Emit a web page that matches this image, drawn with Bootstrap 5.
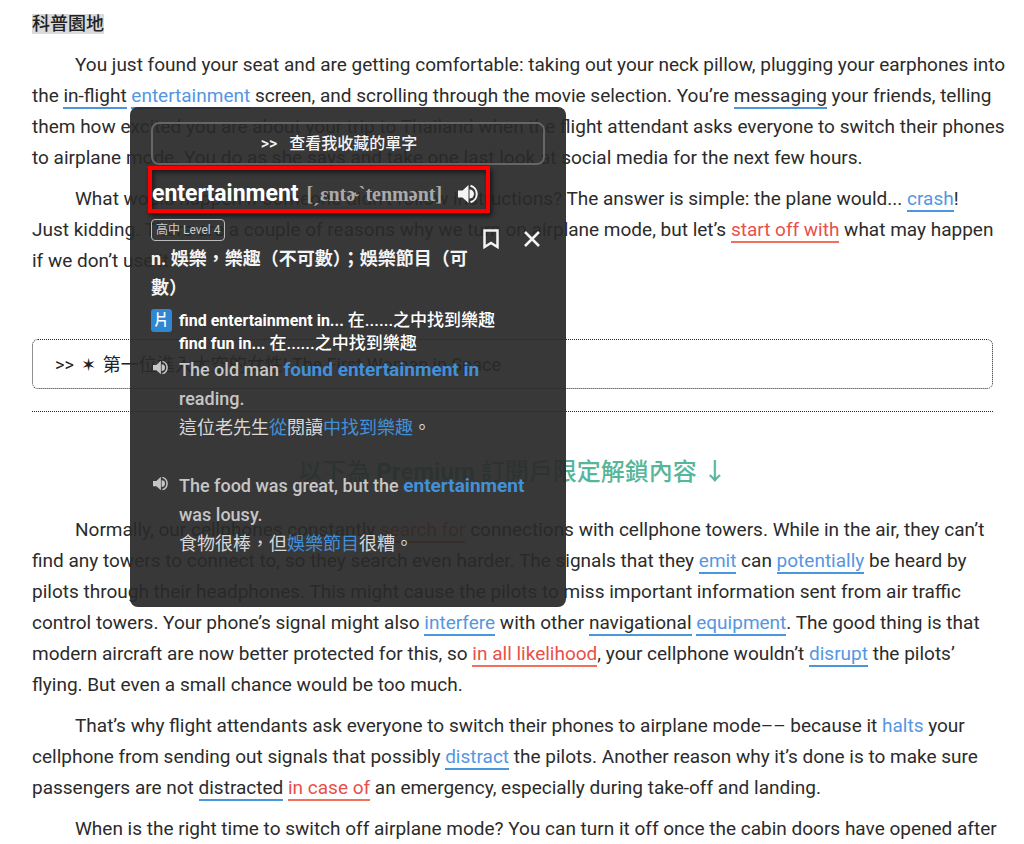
<!DOCTYPE html>
<html lang="zh-Hant">
<head>
<meta charset="utf-8">
<meta name="viewport" content="width=device-width, initial-scale=1">
<title>科普園地</title>
<link href="https://cdn.jsdelivr.net/npm/bootstrap@5.3.0/dist/css/bootstrap.min.css" rel="stylesheet">
<style>
  body { font-family: Roboto, "Noto Sans CJK TC", sans-serif; color: #2b2b2b; background: #fff; overflow: hidden; }
  .article { padding: 8px 12px 0 32px; }
  .article p { font-size: 19px; line-height: 31px; margin: 0 0 10px; text-indent: 43px; }
  .section-name { font-size: 18px; line-height: 31px; font-weight: 500; margin: 0 0 10px; }
  .section-name span { background: #dadada; color: #222; display: inline-block; line-height: 20px; }
  .vocab, .vocab-plain, .idiom { text-decoration: none; border-bottom: 2px solid #4a96dc; }
  .vocab { color: #5596e2; }
  .vocab.bare { border-bottom: 0; }
  .vocab-plain { color: #2b2b2b; }
  .idiom { color: #e8504a; border-color: #f0705c; }
  .related { margin: 63px 19px 22px 0; padding: 0 22px; height: 50px; border: 1px dotted #222; border-radius: 6px; font-size: 18px; color: #222; text-decoration: none; gap: 7px; }
  .divider { margin: 0 19px 42px 0; border-top: 1px dotted #222; }
  .premium { margin: 0 19px 24px 0; font-size: 24px; line-height: 36px; font-weight: 500; color: #56b69a; }

  .word-card { top: 107px; left: 130px; width: 436px; min-height: 500px; padding: 15px 21px; border-radius: 8px; background: rgba(41, 41, 41, .93); color: #f4f4f4; }
  .word-card button { color: inherit; background: none; border: 0; padding: 0; line-height: 0; }
  .word-card .saved { border: 2px solid #666; border-radius: 8px; height: 43px; font-size: 16px; line-height: 20px; font-weight: 500; gap: 12px; padding-right: 18px; }
  .headword { margin: 1px 0 4px -3px; height: 47px; border: 4px solid #f00; box-shadow: 2px 3px 5px rgba(0,0,0,.6), inset 2px 3px 5px rgba(0,0,0,.5); padding: 8px 8px 0 0; }
  .headword h1 { font-size: 23px; line-height: 30px; font-weight: 700; margin: 0 8px 0 0; color: #fff; }
  .ipa { font-family: "Liberation Serif", "DejaVu Serif", serif; font-size: 20px; line-height: 30px; font-weight: 700; color: #aaa; margin-right: 16px; }
  .level { display: inline-block; border: 1px solid #bbb; border-radius: 4px; font-size: 12px; line-height: 20px; padding: 0 4px; color: #ccc; }
  .meaning { font-size: 18px; line-height: 29px; font-weight: 700; margin-top: 3px; width: 324px; }
  .tools { gap: 25px; padding: 12px 5px 0 0; }
  .phrase-row { margin-top: 7px; }
  .pos { width: 21px; height: 23px; border-radius: 3px; background: #2f86d2; color: #fff; font-size: 15px; line-height: 23px; font-weight: 500; }
  .phrases { font-size: 16px; line-height: 22px; font-weight: 700; color: #fff; }
  .phrases .zh { font-size: 17px; font-weight: 500; }
  .example { font-size: 18px; line-height: 29px; font-weight: 500; color: #c6c6c6; margin-bottom: 29px; }
  .example b { font-size: 19px; color: #4390da; }
  .example .zh { font-weight: 400; color: #d8d8d8; }
  .example .zh em { font-style: normal; color: #4390da; }
  .lead-col { width: 28px; flex: none; }
  .example .lead-col { padding: 5px 0 0 2px; line-height: 0; }
</style>
</head>
<body>
<main class="article position-relative">
  <h2 class="section-name"><span>科普園地</span></h2>

  <p>You just found your seat and are getting comfortable: taking out your neck pillow, plugging your earphones into<br>
  the <a href="#" class="vocab-plain">in-flight</a> <a href="#" class="vocab">entertainment</a> screen, and scrolling through the movie selection. You’re <a href="#" class="vocab-plain">messaging</a> your friends, telling<br>
  them how excited you are about your trip to Thailand when the flight attendant asks everyone to switch their phones<br>
  to airplane mode. You do as she says and take one last look at social media for the next few hours.</p>

  <p>What would happen if someone didn’t follow instructions? The answer is simple: the plane would... <a href="#" class="vocab">crash</a>!<br>
  Just kidding. There are a couple of reasons why we turn on airplane mode, but let’s <a href="#" class="idiom">start off with</a> what may happen<br>
  if we don’t use it.</p>

  <a href="#" class="related d-flex align-items-center"><span>&gt;&gt;</span><span>✶</span><span>第一位進入太空的女性! The First Woman in Space</span></a>
  <div class="divider"></div>
  <h3 class="premium text-center">以下為 <b>Premium</b> 訂閱戶限定解鎖內容 ↓</h3>

  <p>Normally, our cellphones constantly <a href="#" class="idiom">search for</a> connections with cellphone towers. While in the air, they can’t<br>
  find any towers to connect to, so they search even harder. The signals that they <a href="#" class="vocab">emit</a> can <a href="#" class="vocab">potentially</a> be heard by<br>
  pilots through their headphones. This might cause the pilots to miss important information sent from air traffic<br>
  control towers. Your phone’s signal might also <a href="#" class="vocab">interfere</a> with other <a href="#" class="vocab-plain">navigational</a> <a href="#" class="vocab">equipment</a>. The good thing is that<br>
  modern aircraft are now better protected for this, so <a href="#" class="idiom">in all likelihood</a>, your cellphone wouldn’t <a href="#" class="vocab">disrupt</a> the pilots’<br>
  flying. But even a small chance would be too much.</p>

  <p>That’s why flight attendants ask everyone to switch their phones to airplane mode–– because it <a href="#" class="vocab bare">halts</a> your<br>
  cellphone from sending out signals that possibly <a href="#" class="vocab">distract</a> the pilots. Another reason why it’s done is to make sure<br>
  passengers are not <a href="#" class="vocab-plain">distracted</a> <a href="#" class="idiom">in case of</a> an emergency, especially during take-off and landing.</p>

  <p>When is the right time to switch off airplane mode? You can turn it off once the cabin doors have opened after</p>

  <!-- dictionary pop-up over the article -->
  <aside class="word-card position-absolute" aria-label="entertainment">
    <button type="button" class="saved w-100 d-flex justify-content-center align-items-center"><span>&gt;&gt;</span><span>查看我收藏的單字</span></button>
    <div class="headword d-inline-flex align-items-center">
      <h1>entertainment</h1>
      <span class="ipa">[ˏεntɚˋtenmənt]</span>
      <button type="button" aria-label="播放發音">
        <svg width="20" height="20" viewBox="0 0 20 20" fill="currentColor"><path d="M0 6.500h4.500L10.500 1v18L4.500 13.500H0z"/><path d="M11.500 5.500a4.500 4.500 0 0 1 0 9z"/><path d="M12.500 1.800a8.500 8.500 0 0 1 0 16.400" fill="none" stroke="currentColor" stroke-width="2"/></svg>
      </button>
    </div>
    <div class="d-flex justify-content-between">
      <div>
        <span class="level">高中 Level 4</span>
        <div class="meaning">n. 娛樂，樂趣（不可數）；娛樂節目（可數）</div>
      </div>
      <div class="tools d-flex align-items-start">
        <button type="button" aria-label="收藏"><svg width="16" height="20" viewBox="0 0 16 20" fill="none" stroke="currentColor" stroke-width="2.500"><path d="M1.500 1.500h13v16.500L8 14l-6.500 4z"/></svg></button>
        <button type="button" aria-label="關閉"><svg width="16" height="20" viewBox="0 0 16 20" fill="none" stroke="currentColor" stroke-width="2.500"><path d="M1 3l14 14M15 3L1 17"/></svg></button>
      </div>
    </div>
    <div class="d-flex phrase-row">
      <div class="lead-col"><div class="pos text-center">片</div></div>
      <div class="phrases">find entertainment in... <span class="zh">在......之中找到樂趣</span><br>find fun in... <span class="zh">在......之中找到樂趣</span></div>
    </div>
    <div class="d-flex example">
      <div class="lead-col"><button type="button" aria-label="播放例句"><svg width="15" height="15" viewBox="0 0 20 20" fill="currentColor"><path d="M0 6.500h4.500L10.500 1v18L4.500 13.500H0z"/><path d="M11.500 5.500a4.500 4.500 0 0 1 0 9z"/><path d="M12.500 1.800a8.500 8.500 0 0 1 0 16.400" fill="none" stroke="currentColor" stroke-width="2"/></svg></button></div>
      <div>The old man <b>found entertainment in</b> reading.
        <div class="zh">這位老先生<em>從</em>閱讀<em>中找到樂趣</em>。</div></div>
    </div>
    <div class="d-flex example">
      <div class="lead-col"><button type="button" aria-label="播放例句"><svg width="15" height="15" viewBox="0 0 20 20" fill="currentColor"><path d="M0 6.500h4.500L10.500 1v18L4.500 13.500H0z"/><path d="M11.500 5.500a4.500 4.500 0 0 1 0 9z"/><path d="M12.500 1.800a8.500 8.500 0 0 1 0 16.400" fill="none" stroke="currentColor" stroke-width="2"/></svg></button></div>
      <div>The food was great, but the <b>entertainment</b> was lousy.
        <div class="zh">食物很棒，但<em>娛樂節目</em>很糟。</div></div>
    </div>
  </aside>
</main>
<script src="https://cdn.jsdelivr.net/npm/bootstrap@5.3.0/dist/js/bootstrap.bundle.min.js"></script>
</body>
</html>
